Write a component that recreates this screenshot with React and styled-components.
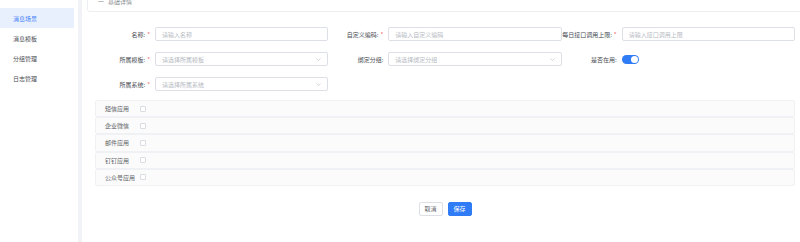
import React from 'react';
import styled, { createGlobalStyle } from 'styled-components';

// ------ GLOBAL --------
const GlobalStyle = createGlobalStyle`
  html, body {
    margin: 0;
    padding: 0;
    background: #ffffff;
    font-family: 'Noto Sans CJK SC', 'Noto Sans', sans-serif;
    overflow: hidden;
  }
  * {
    box-sizing: border-box;
  }
`;

// ------ PAGE LAYOUT --------
const Page = styled.div`
  display: flex;
  width: 800px;
  height: 242px;
  overflow: hidden;
`;

const Sidebar = styled.nav`
  display: flex;
  flex-direction: column;
  width: 82px;
  flex-shrink: 0;
  padding-top: 8px;
  border-right: 4px solid #f0f2f5;
`;

const MenuItem = styled.div`
  height: 20px;
  width: 74px;
  display: flex;
  align-items: center;
  padding-left: 13px;
  font-size: 6px;
  color: ${(p) => (p.active ? '#3f7ff5' : '#4a4d53')};
  background: ${(p) => (p.active ? '#e8f0fe' : 'transparent')};
`;

const Main = styled.main`
  flex: 1;
  padding-left: 5px;
  display: flex;
  flex-direction: column;
`;

// ------ TOP CARD --------
const TopCard = styled.div`
  margin-top: -8px;
  margin-right: -4px;
  height: 20px;
  border: 1px solid #eceef2;
  border-radius: 3px;
  padding: 3px 0 0 10px;
  font-size: 6px;
  line-height: 12px;
  color: #8a8d93;
`;

// ------ FORM --------
const FormGrid = styled.div`
  margin: 15px 0 0 8px;
  width: 700px;
  display: grid;
  grid-template-columns: repeat(3, 1fr);
  row-gap: 11px;
`;

const Field = styled.div`
  display: flex;
  align-items: center;
  height: 14px;
`;

const Label = styled.label`
  width: 60px;
  flex-shrink: 0;
  padding-right: 5px;
  text-align: right;
  font-size: 6px;
  color: #484b52;
  white-space: nowrap;
`;

const Star = styled.span`
  color: #f56c6c;
  margin-left: 2px;
`;

const InputBox = styled.div`
  flex: 1;
  height: 14px;
  border: 1px solid #dcdfe6;
  border-radius: 2px;
  display: flex;
  align-items: center;
  justify-content: space-between;
  padding: 0 6px;
  font-size: 6px;
  color: #b6bac2;
`;

const Toggle = styled.div`
  width: 17px;
  height: 9px;
  border-radius: 5px;
  background: #2f7cf6;
  position: relative;

  &::after {
    content: '';
    position: absolute;
    right: 1px;
    top: 1px;
    width: 7px;
    height: 7px;
    border-radius: 50%;
    background: #ffffff;
  }
`;

const Arrow = () => (
  <svg width="5" height="3" viewBox="0 0 10 6" fill="none">
    <path d="M1 1l4 4 4-4" stroke="#b6bac2" strokeWidth="1.2" />
  </svg>
);

// ------ APP LIST --------
const AppList = styled.div`
  margin: 9px 0 0 8px;
  width: 700px;
  display: flex;
  flex-direction: column;
`;

const AppRow = styled.div`
  height: 17.2px;
  display: flex;
  align-items: center;
  padding-left: 9px;
  background: #fbfbfb;
  border: 1px solid #f0f1f4;
  border-radius: 2px;
`;

const AppName = styled.span`
  width: 35px;
  font-size: 6px;
  color: #606266;
  white-space: nowrap;
`;

const Check = styled.span`
  width: 6px;
  height: 6px;
  border: 1px solid #d9dce2;
  border-radius: 1px;
  background: #ffffff;
`;

// ------ BUTTONS --------
const Actions = styled.div`
  margin: 16px 0 0 8px;
  width: 700px;
  display: flex;
  justify-content: center;
  gap: 5px;
`;

const Button = styled.button`
  width: 24px;
  height: 14px;
  padding: 0;
  font-family: inherit;
  font-size: 6px;
  border-radius: 2px;
  border: 1px solid ${(p) => (p.primary ? '#2f7cf6' : '#dcdfe6')};
  background: ${(p) => (p.primary ? '#2f7cf6' : '#ffffff')};
  color: ${(p) => (p.primary ? '#ffffff' : '#606266')};
`;

const menu = ['消息场景', '消息模板', '分组管理', '日志管理'];
const apps = ['短信应用', '企业微信', '邮件应用', '钉钉应用', '公众号应用'];

function FormField({ label, required, placeholder, select, children }) {
  return (
    <Field>
      <Label>
        {label}
        {required && <Star>*</Star>}
      </Label>
      {children || (
        <InputBox>
          <span>{placeholder}</span>
          {select && <Arrow />}
        </InputBox>
      )}
    </Field>
  );
}

export default function App() {
  return (
    <>
      <GlobalStyle />
      <Page>
        <Sidebar>
          {menu.map((m, i) => (
            <MenuItem key={m} active={i === 0}>{m}</MenuItem>
          ))}
        </Sidebar>
        <Main>
          <TopCard>一&nbsp;&nbsp;&nbsp;基础详情</TopCard>
          <FormGrid>
            <FormField label="名称:" required placeholder="请输入名称" />
            <FormField label="自定义编码:" required placeholder="请输入自定义编码" />
            <FormField label="每日接口调用上限:" required placeholder="请输入接口调用上限" />
            <FormField label="所属模板:" required placeholder="请选择所属模板" select />
            <FormField label="绑定分组:" placeholder="请选择绑定分组" select />
            <FormField label="是否在用:">
              <Toggle />
            </FormField>
            <FormField label="所属系统:" required placeholder="请选择所属系统" select />
          </FormGrid>
          <AppList>
            {apps.map((a) => (
              <AppRow key={a}>
                <AppName>{a}</AppName>
                <Check />
              </AppRow>
            ))}
          </AppList>
          <Actions>
            <Button>取消</Button>
            <Button primary>保存</Button>
          </Actions>
        </Main>
      </Page>
    </>
  );
}
